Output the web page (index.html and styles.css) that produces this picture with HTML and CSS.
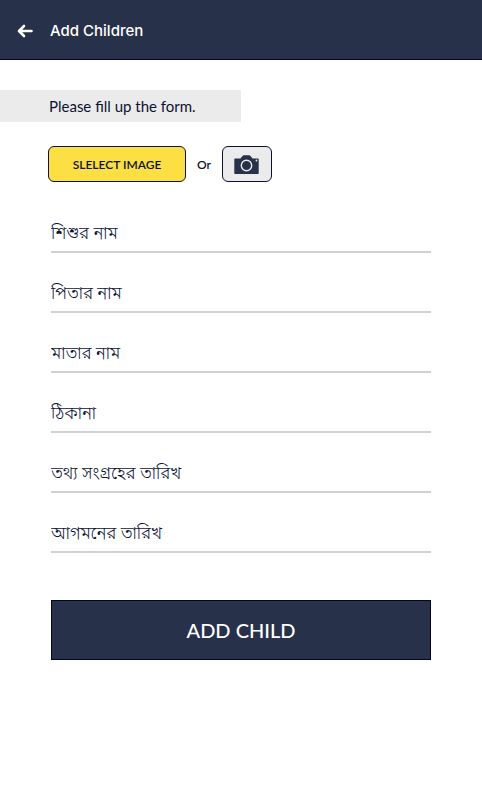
FILE: index.html
```html
<!DOCTYPE html>
<html lang="en">
<head>
  <meta charset="UTF-8">
  <meta name="viewport" content="width=device-width, initial-scale=1.0">
  <title>Add Children</title>
  <link rel="stylesheet" href="styles.css">
</head>
<body>

  <header class="header">
    <a href="#" class="back-link" aria-label="Back">
      <svg width="16" height="14" viewBox="0 0 16 14" fill="none" stroke="#fff" stroke-width="2.6" stroke-linecap="round" stroke-linejoin="round">
        <path d="M7 2L2 7l5 5M2.5 7H14.5"/>
      </svg>
    </a>
    <h1 class="title">Add Children</h1>
  </header>

  <main>
    <p class="notice">Please fill up the form.</p>

    <form class="form">
      <!-- Image -->
      <div class="image-row">
        <button type="button" class="btn-select">SLELECT IMAGE</button>
        <span class="or">Or</span>
        <button type="button" class="btn-camera" aria-label="Take a photo">
          <svg width="25" height="19" viewBox="0 0 25 19">
            <path fill="#27314a" d="M1 3.500H6.500L8.300 1.200Q9 .3 10 .3h5q1 0 1.700.9l1.800 2.300h5.500q.7 0 .7.700v14q0 .7-.7.700h-23q-.7 0-.7-.7V4.200q0-.7.7-.7z"/>
            <circle cx="12.500" cy="10.500" r="5.200" fill="none" stroke="#ebebeb" stroke-width="1.400"/>
            <circle cx="22.500" cy="5.500" r=".9" fill="#ebebeb"/>
          </svg>
        </button>
      </div>

      <!-- Child details -->
      <div class="fields" lang="bn">
        <input type="text" class="input-field" placeholder="শিশুর নাম" aria-label="শিশুর নাম">
        <input type="text" class="input-field" placeholder="পিতার নাম" aria-label="পিতার নাম">
        <input type="text" class="input-field" placeholder="মাতার নাম" aria-label="মাতার নাম">
        <input type="text" class="input-field" placeholder="ঠিকানা" aria-label="ঠিকানা">
        <input type="text" class="input-field" placeholder="তথ্য সংগ্রহের তারিখ" aria-label="তথ্য সংগ্রহের তারিখ">
        <input type="text" class="input-field" placeholder="আগমনের তারিখ" aria-label="আগমনের তারিখ">
      </div>

      <button type="submit" class="btn-submit">ADD CHILD</button>
    </form>
  </main>

</body>
</html>
```
FILE: styles.css
```css
* {
  box-sizing: border-box;
}
body {
  font-family: Lato, "Noto Sans", sans-serif;
  background: #fff;
  color: #0b1233;
  margin: 0;
}
.header {
  display: flex;
  align-items: center;
  gap: 16px;
  padding: 19px 17px 16px;
  background: #27314a;
  border-bottom: 1px solid #020624;
}
.back-link {
  display: flex;
  width: 17px;
}
.title {
  margin: 0;
  color: #fff;
  font-family: Inter, sans-serif;
  font-size: 15px;
  font-weight: 500;
  line-height: 24px;
}
.notice {
  width: 50%;
  margin: 30px 0 0;
  padding: 4px 0 4px 49px;
  background: #ebebeb;
  font-size: 15px;
  line-height: 24px;
  white-space: nowrap;
}
.form {
  padding: 24px 51px;
}
.image-row {
  display: flex;
  align-items: center;
  gap: 11px;
  margin-left: -3px;
}
.btn-select,
.btn-camera {
  height: 36px;
  padding: 0;
  border: 1px solid #0b1233;
  border-radius: 6px;
  cursor: pointer;
}
.btn-select {
  width: 138px;
  background: #fbdf43;
  color: #0b1233;
  font-family: inherit;
  font-size: 12px;
  font-weight: 600;
}
.or {
  font-size: 12px;
  font-weight: 600;
}
.btn-camera {
  display: flex;
  align-items: center;
  justify-content: center;
  width: 50px;
  background: #ebebeb;
}
.fields {
  display: grid;
  gap: 20px;
  margin-top: 31px;
}
.input-field {
  width: 100%;
  height: 40px;
  padding: 4px 0 0;
  border: none;
  border-bottom: 2px solid #d0d0d0;
  background: none;
  color: #0b1233;
  font-family: "Noto Sans Bengali", "Noto Sans", sans-serif;
  font-size: 17px;
  font-weight: 300;
}
.input-field::placeholder {
  color: #0b1233;
  opacity: 1;
}
.input-field:focus {
  outline: none;
  border-color: #27314a;
}
.btn-submit {
  width: 100%;
  height: 60px;
  margin-top: 47px;
  border: 1px solid #020624;
  background: #27314a;
  color: #fff;
  font-family: inherit;
  font-size: 20px;
  font-weight: 500;
  cursor: pointer;
}
```
